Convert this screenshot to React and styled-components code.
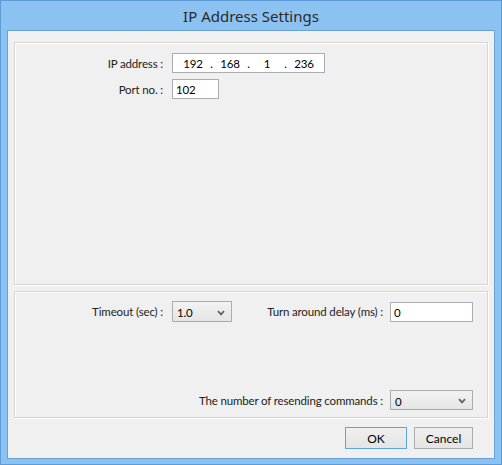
import React from 'react';
import styled, { createGlobalStyle } from 'styled-components';

const GlobalStyle = createGlobalStyle`
  html, body {
    margin: 0;
    padding: 0;
    background: #ffffff;
  }
  body {
    font-family: Lato, "Noto Sans", sans-serif;
  }
`;

const Window = styled.div`
  box-sizing: border-box;
  width: 502px;
  height: 465px;
  display: flex;
  flex-direction: column;
  background: #8cc2f2;
  border: 1px solid #5f9bd6;
  padding: 0 6px 5px;
`;

const TitleBar = styled.div`
  height: 28px;
  display: flex;
  align-items: center;
  justify-content: center;
  font-family: "Noto Sans", sans-serif;
  font-size: 15px;
  color: #2b2b2b;
  padding-top: 1px;
`;

const Client = styled.div`
  flex: 1;
  display: flex;
  flex-direction: column;
  background: #f0f0f0;
  border: 1px solid #6aa2d8;
  padding: 11px 6px 9px;
  font-size: 11.5px;
  letter-spacing: -0.15px;
  color: #222222;
`;

const Panel = styled.div`
  box-sizing: border-box;
  border: 1px solid #d6d6d6;
  box-shadow: inset 1px 1px 0 #ffffff, 1px 1px 0 #ffffff;
  display: flex;
  flex-direction: column;
  ${(p) => (p.$grow ? 'flex: 1;' : `height: ${p.$height}px;`)}
  ${(p) => p.$spread && 'justify-content: space-between;'}
  margin-top: ${(p) => p.$top || 0}px;
  padding: ${(p) => p.$pad};
`;

const Row = styled.div`
  display: flex;
  align-items: center;
  height: ${(p) => p.$h || 20}px;
  margin-bottom: ${(p) => p.$gap || 0}px;
`;

const Label = styled.span`
  width: ${(p) => (p.$w ? `${p.$w}px` : 'auto')};
  ${(p) => p.$fill && 'flex: 1;'}
  text-align: right;
  white-space: nowrap;
  margin-right: ${(p) => p.$space}px;
`;

const TextBox = styled.div`
  box-sizing: border-box;
  width: ${(p) => p.$w}px;
  height: 20px;
  background: #ffffff;
  border: 1px solid #abadb3;
  display: flex;
  align-items: center;
  padding: ${(p) => (p.$ip ? '1px 5px 0' : '1px 3px 0')};
  color: #000000;
`;

const Octet = styled.span`
  width: 30px;
  text-align: center;
`;

const Dot = styled.span`
  width: 7px;
  text-align: center;
`;

const Select = styled.div`
  box-sizing: border-box;
  width: ${(p) => p.$w}px;
  height: ${(p) => p.$h}px;
  border: 1px solid #acacac;
  background: linear-gradient(#f2f2f2, #e5e5e5);
  display: flex;
  align-items: center;
  justify-content: space-between;
  padding: 2px 6px 0 4px;
  color: #000000;
`;

const Footer = styled.div`
  display: flex;
  justify-content: flex-end;
  gap: 7px;
  margin-top: 9px;
  padding-right: 15px;
`;

const Button = styled.button`
  box-sizing: border-box;
  width: ${(p) => p.$w}px;
  height: 22px;
  font-family: inherit;
  font-size: 12px;
  color: #000000;
  background: linear-gradient(#efefef, #e5e5e5);
  border: 1px solid ${(p) => (p.$primary ? '#5fa4e6' : '#acacac')};
  padding: 0;
`;

const Chevron = () => (
  <svg width="8" height="6" viewBox="0 0 8 6">
    <path d="M1 1.2 L4 4.4 L7 1.2" fill="none" stroke="#606060" strokeWidth="1.7" />
  </svg>
);

export default function App() {
  return (
    <>
      <GlobalStyle />
      <Window>
        <TitleBar>IP Address Settings</TitleBar>
        <Client>
          <Panel $grow $pad="10px 0 0">
            <Row $gap={6}>
              <Label $w={148} $space={9}>IP address :</Label>
              <TextBox $w={153} $ip>
                <Octet>192</Octet>
                <Dot>.</Dot>
                <Octet>168</Octet>
                <Dot>.</Dot>
                <Octet>1</Octet>
                <Dot>.</Dot>
                <Octet>236</Octet>
              </TextBox>
            </Row>
            <Row>
              <Label $w={148} $space={9}>Port no. :</Label>
              <TextBox $w={47}>102</TextBox>
            </Row>
          </Panel>
          <Panel $height={127} $spread $top={6} $pad="9px 14px 7px 0">
            <Row $h={21}>
              <Label $w={148} $space={9}>Timeout (sec) :</Label>
              <Select $w={60} $h={21}>
                <span>1.0</span>
                <Chevron />
              </Select>
              <Label $fill $space={7}>Turn around delay (ms) :</Label>
              <TextBox $w={83}>0</TextBox>
            </Row>
            <Row>
              <Label $fill $space={7}>The number of resending commands :</Label>
              <Select $w={83} $h={20}>
                <span>0</span>
                <Chevron />
              </Select>
            </Row>
          </Panel>
          <Footer>
            <Button $primary $w={62}>OK</Button>
            <Button $w={59}>Cancel</Button>
          </Footer>
        </Client>
      </Window>
    </>
  );
}
